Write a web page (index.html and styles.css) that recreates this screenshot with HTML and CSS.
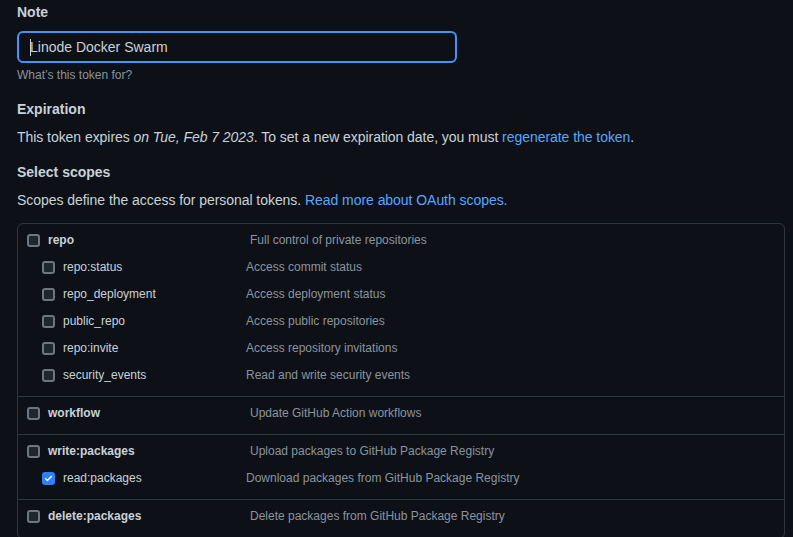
FILE: index.html
```html
<!DOCTYPE html>
<html lang="en">
<head>
<meta charset="utf-8">
<title>Token scopes</title>
<link rel="stylesheet" href="styles.css">
</head>
<body>
<main class="page">
  <label class="field-label" for="note">Note</label>
  <div class="input-wrap"><span class="caret"></span><input id="note" class="text-input" type="text" value="Linode Docker Swarm"></div>
  <p class="hint">What’s this token for?</p>

  <h3 class="section-title first">Expiration</h3>
  <p class="para">This token expires <em>on Tue, Feb 7 2023</em>. To set a new expiration date, you must <a href="#" class="link">regenerate the token</a>.</p>

  <h3 class="section-title">Select scopes</h3>
  <p class="para">Scopes define the access for personal tokens. <a href="#" class="link">Read more about OAuth scopes.</a></p>

  <div class="scopes">
    <div class="group">
      <div class="row top"><span class="scope"><span class="cb"></span><span class="name">repo</span></span><span class="desc">Full control of private repositories</span></div>
      <div class="row sub"><span class="scope"><span class="cb"></span><span class="name">repo:status</span></span><span class="desc">Access commit status</span></div>
      <div class="row sub"><span class="scope"><span class="cb"></span><span class="name">repo_deployment</span></span><span class="desc">Access deployment status</span></div>
      <div class="row sub"><span class="scope"><span class="cb"></span><span class="name">public_repo</span></span><span class="desc">Access public repositories</span></div>
      <div class="row sub"><span class="scope"><span class="cb"></span><span class="name">repo:invite</span></span><span class="desc">Access repository invitations</span></div>
      <div class="row sub"><span class="scope"><span class="cb"></span><span class="name">security_events</span></span><span class="desc">Read and write security events</span></div>
    </div>
    <div class="group">
      <div class="row top"><span class="scope"><span class="cb"></span><span class="name">workflow</span></span><span class="desc">Update GitHub Action workflows</span></div>
    </div>
    <div class="group">
      <div class="row top"><span class="scope"><span class="cb"></span><span class="name">write:packages</span></span><span class="desc">Upload packages to GitHub Package Registry</span></div>
      <div class="row sub"><span class="scope"><span class="cb checked"><svg viewBox="0 0 16 16" width="11" height="11"><path d="M3 8.5l3 3 7-7" fill="none" stroke="#fff" stroke-width="2.4" stroke-linecap="round" stroke-linejoin="round"/></svg></span><span class="name">read:packages</span></span><span class="desc">Download packages from GitHub Package Registry</span></div>
    </div>
    <div class="group">
      <div class="row top"><span class="scope"><span class="cb"></span><span class="name">delete:packages</span></span><span class="desc">Delete packages from GitHub Package Registry</span></div>
    </div>
  </div>
</main>
</body>
</html>
```
FILE: styles.css
```css
html, body {
  margin: 0;
  padding: 0;
  background: #0d1117;
}
body {
  font-family: "Liberation Sans", Arial, sans-serif;
  color: #c9d1d9;
  font-size: 14px;
  line-height: 21px;
}
.page {
  padding: 2px 8px 0 17px;
}
.field-label {
  display: block;
  font-weight: bold;
  font-size: 14px;
  line-height: 21px;
}
.input-wrap {
  position: relative;
  margin-top: 8px;
  width: 440px;
}
.text-input {
  display: block;
  box-sizing: border-box;
  width: 440px;
  height: 32px;
  margin: 0;
  padding: 0 11px;
  background: #0d1117;
  color: #c9d1d9;
  border: 2px solid #4493f8;
  border-radius: 6px;
  font-family: "Liberation Sans", Arial, sans-serif;
  font-size: 14px;
  outline: none;
  caret-color: transparent;
}
.caret {
  position: absolute;
  left: 13px;
  top: 8px;
  width: 1px;
  height: 17px;
  background: #c9d1d9;
}
.hint {
  margin: 3px 0 0;
  font-size: 12px;
  line-height: 18px;
  color: #8b949e;
}
.section-title {
  margin: 14px 0 0;
  font-size: 14px;
  line-height: 21px;
  font-weight: bold;
}
.section-title.first {
  margin-top: 15px;
}
.para {
  margin: 7px 0 0;
  font-size: 14px;
  line-height: 21px;
  letter-spacing: -0.05px;
}
.para em {
  font-style: italic;
}
.link {
  color: #58a6ff;
  text-decoration: none;
}
.scopes {
  margin-top: 12px;
  width: 766px;
  border: 1px solid #30363d;
  border-radius: 6px;
  font-size: 12px;
}
.group {
  padding: 3px 0 7px;
  border-bottom: 1px solid #30363d;
}
.row {
  display: flex;
  align-items: center;
  height: 27px;
}
.scope {
  display: flex;
  align-items: center;
  gap: 8px;
}
.row.top .scope {
  padding-left: 9px;
  width: 223px;
}
.row.top .name {
  font-weight: bold;
  color: #c9d1d9;
}
.row.sub .scope {
  padding-left: 24px;
  width: 204px;
}
.name {
  color: #c9d1d9;
}
.desc {
  color: #8b949e;
}
.cb {
  box-sizing: border-box;
  width: 13px;
  height: 13px;
  border: 2px solid #6e7681;
  border-radius: 3px;
  background: #21262d;
  display: flex;
  align-items: center;
  justify-content: center;
  flex: none;
}
.cb.checked {
  background: #2f81f7;
  border-color: #2f81f7;
}
```
